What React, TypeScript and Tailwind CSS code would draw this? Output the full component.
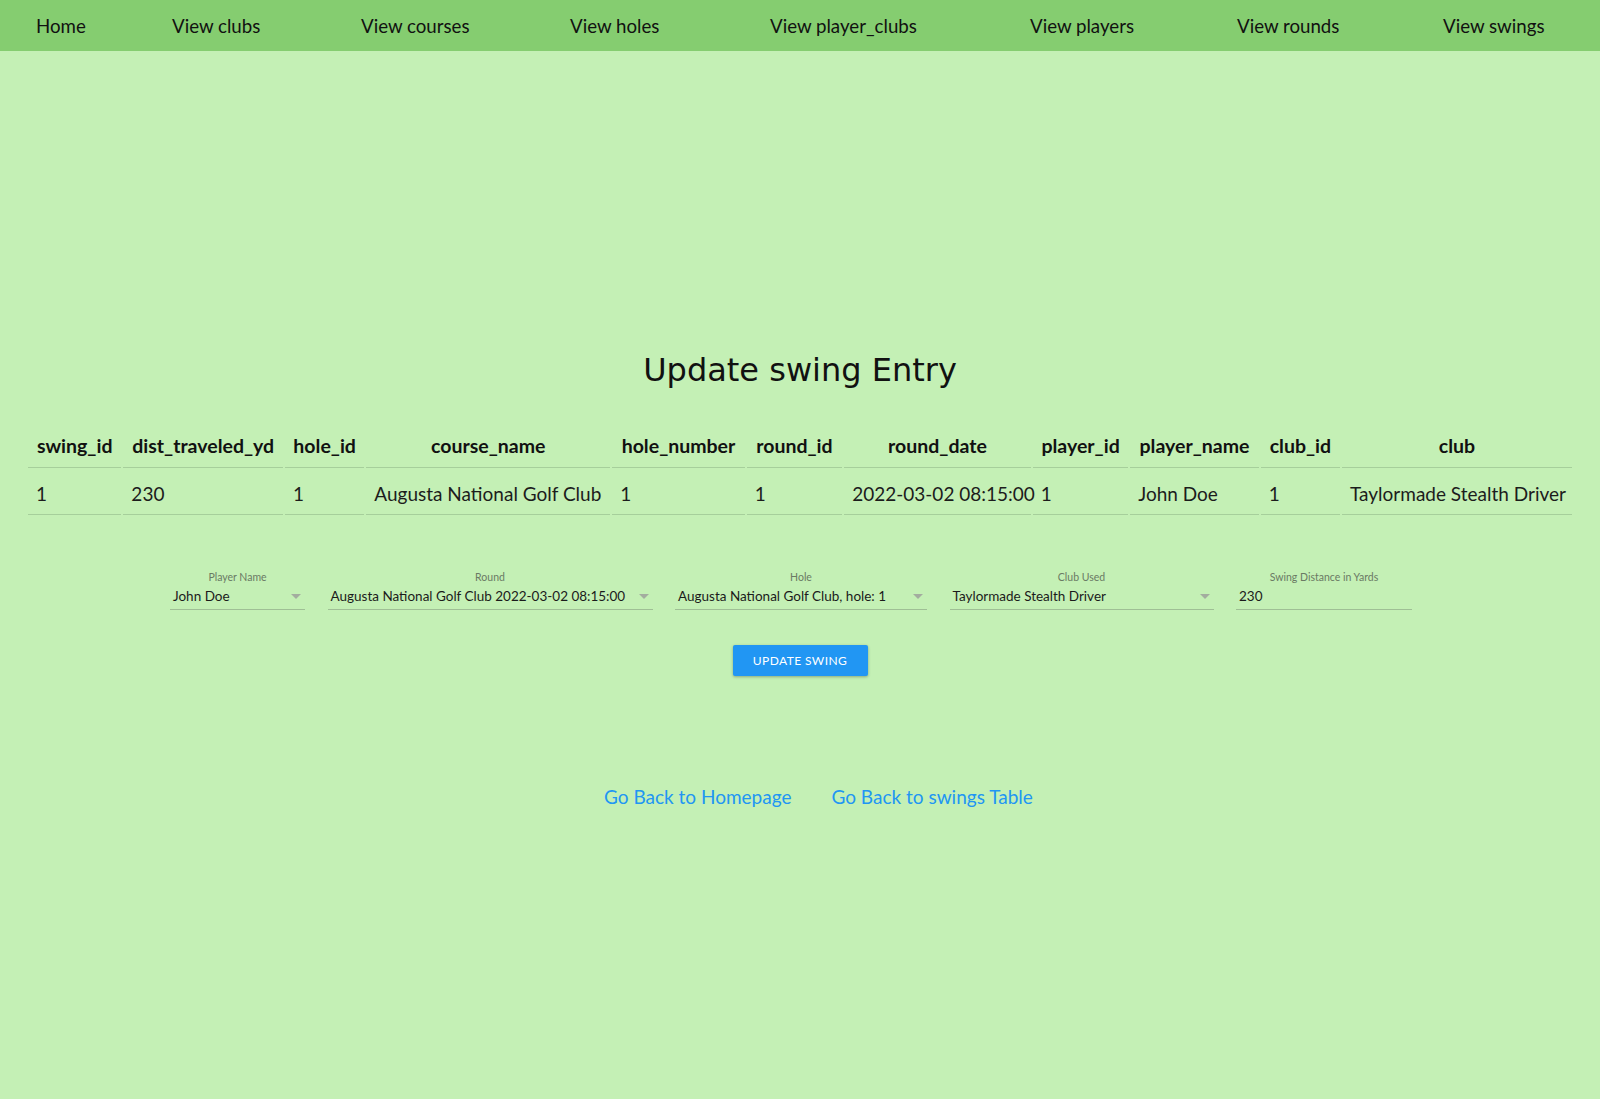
const navItems = [
  { label: "Home", cls: "ml-[36px] w-[49px]" },
  { label: "View clubs", cls: "ml-[87px] w-[88px]" },
  { label: "View courses", cls: "ml-[101px] w-[107px]" },
  { label: "View holes", cls: "ml-[102px] w-[89px]" },
  { label: "View player_clubs", cls: "ml-[111px] w-[146px]" },
  { label: "View players", cls: "ml-[114px] w-[103px]" },
  { label: "View rounds", cls: "ml-[104px] w-[103px]" },
  { label: "View swings", cls: "ml-[103px] w-[100px]" },
];

const columns = [
  { key: "swing_id", w: "w-[93px]" },
  { key: "dist_traveled_yd", w: "w-[159px]" },
  { key: "hole_id", w: "w-[79px]" },
  { key: "course_name", w: "w-[243px]" },
  { key: "hole_number", w: "w-[132px]" },
  { key: "round_id", w: "w-[95px]" },
  { key: "round_date", w: "w-[186px]" },
  { key: "player_id", w: "w-[95px]" },
  { key: "player_name", w: "w-[128px]" },
  { key: "club_id", w: "w-[79px]" },
  { key: "club", w: "w-[229px]" },
];

const row: Record<string, string> = {
  swing_id: "1",
  dist_traveled_yd: "230",
  hole_id: "1",
  course_name: "Augusta National Golf Club",
  hole_number: "1",
  round_id: "1",
  round_date: "2022-03-02 08:15:00",
  player_id: "1",
  player_name: "John Doe",
  club_id: "1",
  club: "Taylormade Stealth Driver",
};

const fields = [
  { label: "Player Name", value: "John Doe", w: "w-[135px]", select: true },
  { label: "Round", value: "Augusta National Golf Club 2022-03-02 08:15:00", w: "w-[325px]", select: true },
  { label: "Hole", value: "Augusta National Golf Club, hole: 1", w: "w-[252px]", select: true },
  { label: "Club Used", value: "Taylormade Stealth Driver", w: "w-[264px]", select: true },
  { label: "Swing Distance in Yards", value: "230", w: "w-[176px]", select: false },
];

function Arrow() {
  return (
    <svg width="10" height="6" viewBox="0 0 10 6" className="shrink-0">
      <path d="M0 0 L10 0 L5 5 Z" fill="#a3ad9f" />
    </svg>
  );
}

export default function App() {
  return (
    <div className="min-h-[1099px] bg-[#c4f0b5] text-[#111] font-['Segoe_UI','Lato',sans-serif]">
      {/* top nav */}
      <nav className="h-[51px] bg-[#85cd70] flex items-center text-[18.7px] pt-[2px]">
        {navItems.map((n) => (
          <a key={n.label} className={`${n.cls} shrink-0 whitespace-nowrap cursor-pointer`}>
            {n.label}
          </a>
        ))}
      </nav>

      <div className="pt-[301px]">
        <h1 className="text-center text-[32px] leading-[37px] font-['DejaVu_Sans',sans-serif] text-[#111]">
          Update swing Entry
        </h1>

        <div className="px-[26px] mt-[33px]">
          <table className="w-full table-fixed border-separate border-spacing-[2px] text-[19px]">
            <colgroup>
              {columns.map((c) => (
                <col key={c.key} className={c.w} />
              ))}
            </colgroup>
            <thead>
              <tr>
                {columns.map((c) => (
                  <th
                    key={c.key}
                    className="h-[44px] px-2 text-[19.5px] font-bold text-center border-b border-[#a6cf9b] whitespace-nowrap"
                  >
                    {c.key}
                  </th>
                ))}
              </tr>
            </thead>
            <tbody>
              <tr>
                {columns.map((c) => (
                  <td
                    key={c.key}
                    className="h-[45px] px-2 pt-[4px] text-left border-b border-[#a6cf9b] whitespace-nowrap text-[#1c1c1c]"
                  >
                    {row[c.key]}
                  </td>
                ))}
              </tr>
            </tbody>
          </table>
        </div>

        {/* form */}
        <div className="flex gap-[22.5px] ml-[170px] mt-[53px]">
          {fields.map((f) => (
            <div key={f.label} className={`${f.w} flex flex-col`}>
              <label className="text-center text-[10.5px] leading-[14px] text-[#6a7a64]">
                {f.label}
              </label>
              <div className="flex items-center justify-between h-[26px] pl-[3px] pr-[4px] border-b border-[#9fbf95] text-[13.5px] text-[#1b1b1b]">
                <span className="whitespace-nowrap">{f.value}</span>
                {f.select && <Arrow />}
              </div>
            </div>
          ))}
        </div>

        <div className="flex justify-center mt-[35px]">
          <button className="w-[135px] h-[31px] bg-[#2196f3] text-white text-[12px] tracking-[0.4px] rounded-[2px] shadow-[0_1px_3px_rgba(0,0,0,0.3)]">
            UPDATE SWING
          </button>
        </div>

        <div className="flex ml-[604px] mt-[107px] text-[19px] text-[#2196f3]">
          <a className="cursor-pointer">Go Back to Homepage</a>
          <a className="cursor-pointer ml-[40px]">Go Back to swings Table</a>
        </div>
      </div>
    </div>
  );
}
